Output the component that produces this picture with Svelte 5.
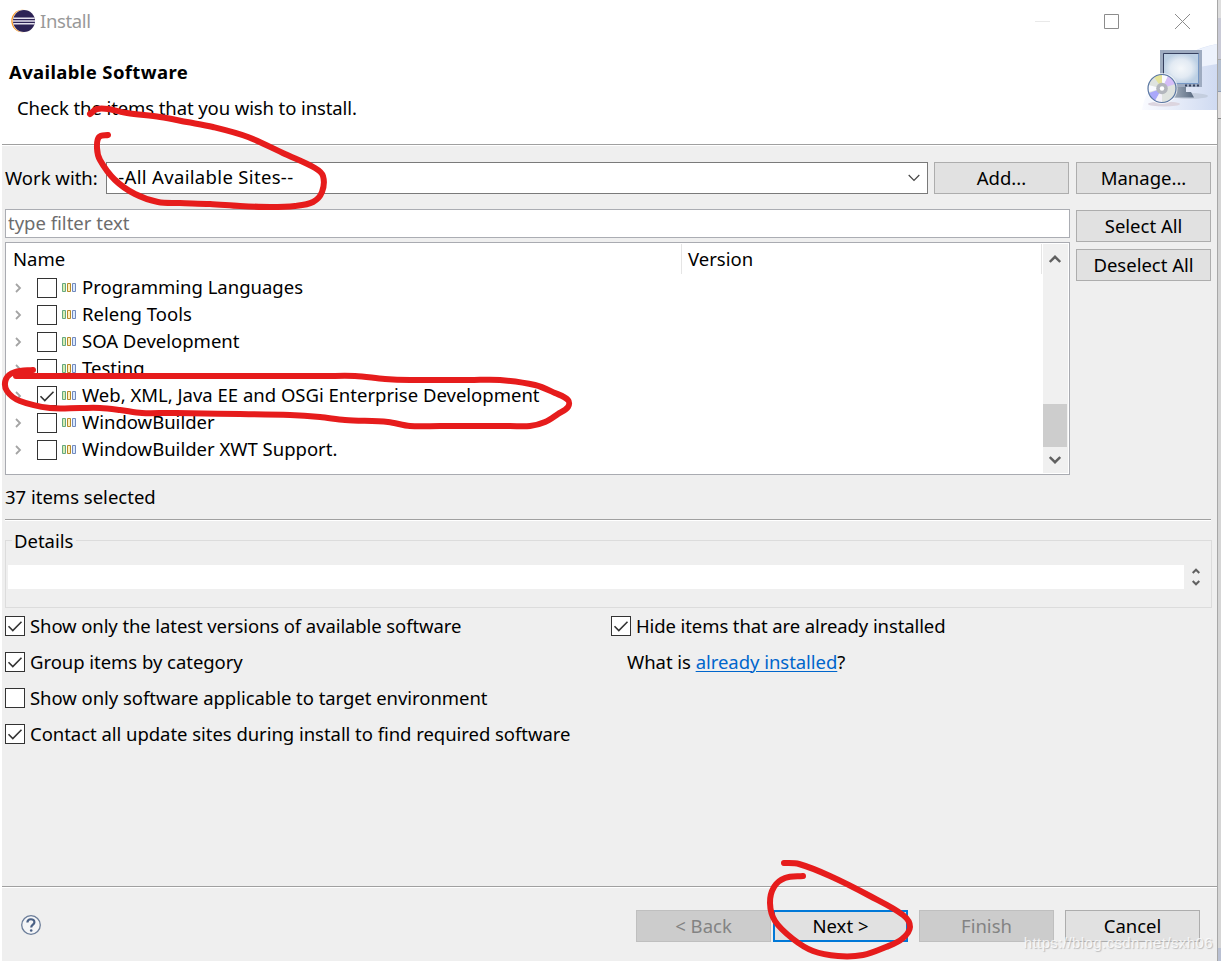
<script lang="ts">
  type Point = [number, number];

  let categories = $state([
    { name: "Programming Languages", checked: false },
    { name: "Releng Tools", checked: false },
    { name: "SOA Development", checked: false },
    { name: "Testing", checked: false },
    { name: "Web, XML, Java EE and OSGi Enterprise Development", checked: true },
    { name: "WindowBuilder", checked: false },
    { name: "WindowBuilder XWT Support.", checked: false },
  ]);

  let options = $state([
    { name: "Show only the latest versions of available software", checked: true },
    { name: "Group items by category", checked: true },
    { name: "Show only software applicable to target environment", checked: false },
    { name: "Contact all update sites during install to find required software", checked: true },
  ]);

  let hideInstalled = $state({ checked: true });

  const marks: Point[][] = [
    [[90, 114], [97, 109], [108, 109], [127, 113], [160, 117], [187, 122], [213, 127], [248, 137], [285, 154], [315, 168], [323, 176], [322, 192], [313, 202], [295, 206], [270, 207], [240, 206], [210, 204], [180, 203], [158, 202], [135, 194], [115, 180], [100, 160], [97, 148], [99, 137], [108, 135]],
    [[33, 370], [15, 372], [6, 379], [7, 391], [20, 401], [50, 408], [80, 408], [100, 408], [120, 410], [142, 413], [170, 413], [240, 414], [290, 415], [320, 417], [345, 420], [388, 422], [410, 426], [440, 426], [510, 426], [530, 426], [545, 422], [558, 414], [568, 407], [568, 400], [555, 393], [535, 385], [500, 380], [470, 380], [410, 380], [385, 379], [355, 376], [325, 376], [50, 376], [16, 376]],
    [[784, 863], [799, 864], [830, 876], [870, 896], [903, 915], [910, 927], [902, 939], [886, 947], [863, 955], [838, 956], [813, 951], [793, 939], [775, 921], [770, 903], [774, 887], [785, 878], [803, 876]],
  ];

  // smooth curve through every point
  function curve(pts: Point[]) {
    let d = `M${pts[0]}`;
    for (let i = 0; i < pts.length - 1; i++) {
      const a = pts[i - 1] ?? pts[i];
      const b = pts[i];
      const c = pts[i + 1];
      const e = pts[i + 2] ?? c;
      const len = Math.hypot(c[0] - b[0], c[1] - b[1]);
      const t1 = Math.min(len / 3 / (Math.hypot(c[0] - a[0], c[1] - a[1]) || 1), 0.3);
      const t2 = Math.min(len / 3 / (Math.hypot(e[0] - b[0], e[1] - b[1]) || 1), 0.3);
      d += `C${b[0] + (c[0] - a[0]) * t1} ${b[1] + (c[1] - a[1]) * t1} `;
      d += `${c[0] - (e[0] - b[0]) * t2} ${c[1] - (e[1] - b[1]) * t2} ${c[0]} ${c[1]}`;
    }
    return d;
  }
</script>

{#snippet check(item: { checked: boolean })}
  <button
    class="check"
    role="checkbox"
    aria-checked={item.checked}
    aria-label="toggle"
    onclick={() => (item.checked = !item.checked)}
  >
    {#if item.checked}
      <svg width="18" height="18" viewBox="0 0 18 18">
        <path d="M2.5 9.2 6.8 13.5 15.5 4.8" fill="none" stroke="#333" stroke-width="1.6" />
      </svg>
    {/if}
  </button>
{/snippet}

<div class="screen">
  <div class="window">
    <header>
      <div class="titlebar">
        <svg class="logo" width="24" height="24" viewBox="0 0 24 24">
          <circle cx="11.5" cy="12" r="11.2" fill="#f7941e" />
          <circle cx="12.8" cy="12" r="11.2" fill="#fff" />
          <circle cx="13" cy="12" r="11" fill="#2c2255" />
          <path d="M2.3 9.2h21.4M2 12h22M2.3 14.8h21.4" stroke="#e4e1ee" stroke-width="1.4" />
        </svg>
        <span class="title">Install</span>
        <svg class="controls" width="160" height="20" viewBox="0 0 160 20">
          <path d="M0 9.5h15" stroke="#e9e9e9" />
          <path d="M69.5 2.5h14v14h-14zM140 2l15 15M155 2l-15 15" fill="none" stroke="#8c8c8c" />
        </svg>
      </div>
      <div class="banner">
        <div>
          <h1>Available Software</h1>
          <p>Check the items that you wish to install.</p>
        </div>
        <svg width="75" height="66" viewBox="0 0 75 66">
          <defs>
            <linearGradient id="sky" x1="0" x2="1">
              <stop offset="0" stop-color="#fafbff" />
              <stop offset="1" stop-color="#cfdaf1" />
            </linearGradient>
            <radialGradient id="glass">
              <stop offset="0" stop-color="#f4f7fa" />
              <stop offset="0.6" stop-color="#e2eaf3" />
              <stop offset="1" stop-color="#bdd0e4" />
            </radialGradient>
            <linearGradient id="stand" x1="0" x2="1">
              <stop offset="0" stop-color="#a5b1c0" />
              <stop offset="1" stop-color="#59697f" />
            </linearGradient>
          </defs>
          <path d="M0 66Q3 46 18 35 42 5 75 0V66Z" fill="url(#sky)" />
          <path d="M18 29Q42 7 75 0V20Q40 25 18 35Z" fill="#edf2fc" />
          <ellipse cx="48" cy="52" rx="18" ry="3" fill="#b8c1d0" opacity=".6" />
          <path d="M33 43h11v5h5l3 5.500H30z" fill="url(#stand)" />
          <path d="M18 6h42v37H18z" fill="#9eabc0" />
          <path d="M21.500 9.500h35v30h-35z" fill="url(#glass)" stroke="#7697c4" />
          <path d="M21.500 39.500v-30h35" fill="none" stroke="#36405f" />
          <path d="M43 41.500h16" stroke="#34405c" stroke-width="2" stroke-dasharray="2 2" />
          <ellipse cx="22" cy="60" rx="16" ry="2.500" fill="#dcd5df" />
          <circle cx="20" cy="44.500" r="15.500" fill="#fff" opacity=".7" />
          <circle cx="20" cy="44.500" r="14" fill="#dfe3df" />
          <path d="M20 44.500 12 33q5-3 8-2.500z" fill="#e5e49b" />
          <path d="M20 44.500V31q4 0 6 1.500zM20 44.500 6.500 41v7z" fill="#f9faff" />
          <path d="M20 44.500 26 32q5 3 7 8z" fill="#d5bef8" />
          <path d="M20 44.500 7 49q2 5 6 8z" fill="#aaa8fb" />
          <path d="M20 44.500 13 57q3 2 7 1.500z" fill="#f4f1fa" />
          <circle cx="20" cy="44.500" r="5.800" fill="#b3b6bd" />
          <circle cx="20" cy="44.500" r="2.200" fill="#fff" />
          <circle cx="20" cy="44.500" r="14" fill="none" stroke="#5976a2" stroke-width="1.200" />
        </svg>
      </div>
    </header>

    <main>
      <div class="work">
        <span class="label">Work with:</span>
        <div class="combo">
          <span>--All Available Sites--</span>
          <svg width="12" height="8" viewBox="0 0 12 8">
            <path d="M.7 1 6 6.300 11.300 1" fill="none" stroke="#444" stroke-width="1.200" />
          </svg>
        </div>
        <button class="btn">Add...</button>
        <button class="btn">Manage...</button>
      </div>

      <div class="pick">
        <div class="list">
          <input placeholder="type filter text" />
          <div class="tree">
            <div class="content">
              <div class="columns">
                <span class="name">Name</span>
                <span class="version">Version</span>
              </div>
              {#each categories as item}
                <div class="row">
                  <svg class="arrow" width="7" height="10" viewBox="0 0 7 10">
                    <path d="M1 1l4 4-4 4" fill="none" stroke="#a4a4a4" stroke-width="1.800" />
                  </svg>
                  {@render check(item)}
                  <svg class="category" width="15" height="9" viewBox="0 0 15 9">
                    <path d="M.5.500h3v8h-3z" fill="#d9edb0" stroke="#66a880" />
                    <path d="M5.500.500h3v8h-3z" fill="#fff0bd" stroke="#b58a2a" />
                    <path d="M10.500.500h3v8h-3z" fill="#dcebff" stroke="#7189bd" />
                  </svg>
                  <span>{item.name}</span>
                </div>
              {/each}
            </div>
            <div class="scrollbar">
              <svg width="12" height="10" viewBox="0 0 12 10">
                <path d="M.8 8 6 2.800 11.200 8" fill="none" stroke="#606060" stroke-width="2.400" />
              </svg>
              <div class="thumb"></div>
              <svg width="12" height="10" viewBox="0 0 12 10">
                <path d="M.8 2 6 7.200 11.200 2" fill="none" stroke="#606060" stroke-width="2.400" />
              </svg>
            </div>
          </div>
        </div>
        <div class="side">
          <button class="btn">Select All</button>
          <button class="btn">Deselect All</button>
        </div>
      </div>

      <div class="status">37 items selected</div>

      <fieldset>
        <legend>Details</legend>
        <div class="details">
          <div class="field"></div>
          <svg width="8" height="18" viewBox="0 0 8 18">
            <path d="M.7 5 4 1.700 7.300 5M.7 13 4 16.300 7.300 13" fill="none" stroke="#606060" stroke-width="2" />
          </svg>
        </div>
      </fieldset>

      <div class="options">
        <div>
          {#each options as item}
            <div class="option">
              {@render check(item)}
              <span>{item.name}</span>
            </div>
          {/each}
        </div>
        <div>
          <div class="option">
            {@render check(hideInstalled)}
            <span>Hide items that are already installed</span>
          </div>
          <div class="option what">
            <span>What is <a href="#installed">already installed</a>?</span>
          </div>
        </div>
      </div>
    </main>

    <footer>
      <svg class="help" width="20" height="20" viewBox="0 0 20 20">
        <circle cx="10" cy="10" r="9.300" fill="#f4f5f7" stroke="#6b7d99" stroke-width="1.300" />
        <path d="M6.400 7.600C6.400 3.200 13.400 3.200 13.400 7.200 13.400 9.600 10.200 9.700 10.200 12.500" fill="none" stroke="#4a6186" stroke-width="2.200" />
        <circle cx="10.200" cy="15.500" r="1.300" fill="#4a6186" />
      </svg>
      <button class="btn back" disabled>&lt; Back</button>
      <button class="btn next">Next &gt;</button>
      <button class="btn finish" disabled>Finish</button>
      <button class="btn cancel">Cancel</button>
    </footer>
  </div>
  <div class="behind"></div>

  <svg class="marks" width="1221" height="961" viewBox="0 0 1221 961">
    {#each marks as pts}
      <path d={curve(pts)} />
    {/each}
  </svg>
  <div class="watermark">https://blog.csdn.net/sxh06</div>
</div>

<style>
  :global(body) {
    margin: 0;
    overflow: hidden;
  }

  .screen {
    position: relative;
    display: flex;
    box-sizing: border-box;
    width: 1221px;
    height: 961px;
    padding-left: 2px;
    background: #fff;
    color: #000;
    font: 18.5px/27px "Noto Sans", "Open Sans", sans-serif;
    white-space: nowrap;
  }

  .screen *,
  .screen *::before {
    box-sizing: border-box;
  }

  .window {
    display: flex;
    flex-direction: column;
    width: 1216px;
    border-right: 1px solid #a7a7a7;
    background: #efefef;
  }

  .behind {
    width: 3px;
    background: linear-gradient(#dedede 18px, #c9cad6 18px 59px, #aaa 59px 60px, #b4bfd0 60px 91px, #8c9bb5 91px 92px, #dfdddd 92px 118px, #888 118px 119px, #d5d5d5 119px 948px, #b9c0d2 948px);
  }

  header {
    height: 146px;
    border-bottom: 1px solid #fff;
    background: #fff;
    box-shadow: inset 0 -1px #a0a0a0;
  }

  .titlebar {
    display: flex;
    align-items: center;
    height: 44px;
    padding-left: 9px;
  }

  .title {
    margin-left: 5px;
    color: #999;
    letter-spacing: -0.35px;
  }

  .logo {
    margin-top: -2px;
  }

  .title {
    margin-top: -4px;
  }

  .controls {
    margin: -1px 22px 0 auto;
  }

  .banner {
    display: flex;
    justify-content: space-between;
  }

  h1 {
    margin: 14px 0 0 7px;
    font-size: 18.5px;
    line-height: 27px;
    letter-spacing: 0.37px;
  }

  p {
    margin: 9px 0 0 15px;
    letter-spacing: -0.1px;
  }

  main {
    flex: 1;
    padding: 16px 6px 0 3px;
  }

  .work {
    display: flex;
    height: 32px;
  }

  .label {
    width: 101px;
    line-height: 32px;
  }

  .combo {
    display: flex;
    align-items: center;
    justify-content: space-between;
    width: 822px;
    margin-right: 6px;
    padding: 0 7px 2px 5px;
    border: 1px solid #7a7a7a;
    background: #fff;
    letter-spacing: 0.33px;
  }

  .combo span {
    margin-top: -2px;
  }

  .combo svg {
    margin-top: 2px;
  }

  .btn {
    width: 135px;
    height: 32px;
    padding: 0 0 2px;
    border: 1px solid #adadad;
    background: #e1e1e1;
    color: #000;
    font: inherit;
  }

  .work .btn:last-child {
    margin-left: 7px;
  }

  .pick {
    display: flex;
    gap: 6px;
    margin-top: 15px;
  }

  .list {
    width: 1065px;
  }

  input {
    display: block;
    width: 100%;
    height: 29px;
    padding: 0 2px 2px;
    border: 1px solid #abadb3;
    background: #fff;
    font: inherit;
  }

  input::placeholder {
    color: #6d6d6d;
  }

  .tree {
    display: flex;
    justify-content: space-between;
    height: 233px;
    margin-top: 4px;
    padding: 1px;
    border: 1px solid #a9abb1;
    background: #fff;
  }

  .columns {
    display: flex;
    width: 1035px;
    height: 30px;
    border-right: 1px solid #e5e5e5;
    line-height: 29px;
  }

  .name {
    width: 675px;
    padding-left: 6px;
    border-right: 1px solid #e5e5e5;
  }

  .version {
    padding-left: 6px;
  }

  .row {
    display: flex;
    align-items: center;
    height: 27px;
    padding-left: 8px;
  }

  .row span {
    margin-top: -2px;
  }

  .arrow {
    margin: 1px 15px 0 0;
  }

  .row .check {
    margin-top: 1px;
  }

  .category {
    margin: -1px 5px 0 5px;
  }

  .check {
    flex: none;
    width: 20px;
    height: 20px;
    padding: 0;
    border: 1px solid #333;
    background: #fff;
  }

  .check svg {
    display: block;
  }

  .scrollbar {
    display: flex;
    flex-direction: column;
    align-items: center;
    width: 25px;
    padding: 10px 1px 8px 0;
    background: #f0f0f0;
  }

  .thumb {
    width: 24px;
    height: 43px;
    margin: auto 0 8px;
    background: #cdcdcd;
  }

  .side {
    display: flex;
    flex-direction: column;
    gap: 7px;
    padding-top: 1px;
  }

  .status {
    height: 46px;
    padding-top: 8px;
    border-bottom: 1px solid #fff;
    box-shadow: inset 0 -1px #a0a0a0;
  }

  fieldset {
    height: 81px;
    margin: 6px -1px 0 0;
    padding: 0;
    border: 1px solid #dcdcdc;
  }

  legend {
    margin-left: 6px;
    padding: 0 3px 0 2px;
  }

  .details {
    display: flex;
    align-items: center;
    gap: 8px;
    padding: 11px 0 0 2px;
  }

  .field {
    width: 1176px;
    height: 24px;
    background: #fff;
  }

  .options {
    display: grid;
    grid-template-columns: 606px 1fr;
  }

  .option {
    display: flex;
    align-items: center;
    gap: 5px;
    height: 36px;
    letter-spacing: -0.04px;
  }

  .option:first-child {
    letter-spacing: -0.1px;
  }

  .option span {
    margin-top: -2px;
  }

  .what {
    padding-left: 16px;
  }

  a {
    color: #0066cc;
    text-decoration-thickness: 1px;
    text-underline-offset: 2px;
  }

  footer {
    display: flex;
    height: 75px;
    padding: 23px 17px 0 19px;
    border-top: 1px solid #a0a0a0;
    box-shadow: inset 0 1px #fff;
  }

  .help {
    margin: 5px auto 0 0;
  }

  .btn:disabled {
    border-color: #bfbfbf;
    background: #ccc;
    color: #838383;
  }

  .next {
    margin-left: 2px;
    border: 2px solid #0078d7;
  }

  .finish,
  .cancel {
    margin-left: 11px;
  }

  .marks {
    position: absolute;
    inset: 0;
    pointer-events: none;
  }

  .marks path {
    fill: none;
    stroke: #e61c1c;
    stroke-width: 6;
    stroke-linecap: round;
    stroke-linejoin: round;
  }

  .watermark {
    position: absolute;
    right: 8px;
    bottom: 9px;
    color: rgba(255, 255, 255, 0.75);
    font: 15px/18px "Liberation Sans", sans-serif;
    letter-spacing: 0.4px;
    text-shadow: 1px 1px 1px #bbb;
  }
</style>
